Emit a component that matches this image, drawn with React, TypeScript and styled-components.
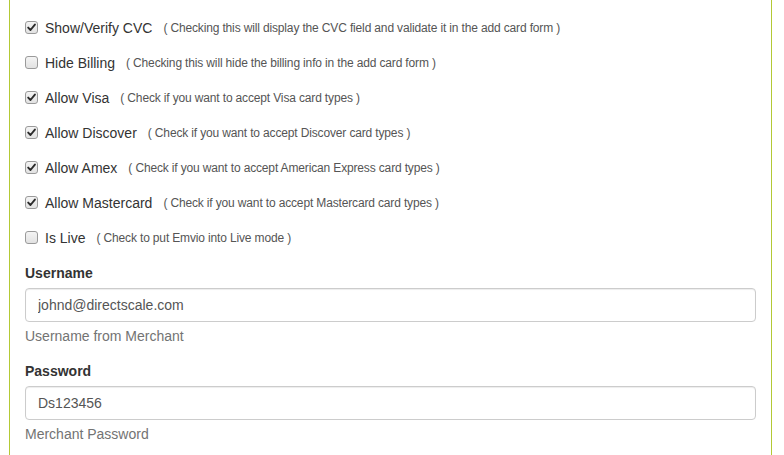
import React from 'react';
import styled, { createGlobalStyle } from 'styled-components';

const GlobalStyle = createGlobalStyle`
  html, body {
    margin: 0;
    padding: 0;
    background: #fff;
  }
  body {
    font-family: "Liberation Sans", Arial, Helvetica, sans-serif;
    font-size: 14px;
    color: #333;
  }
`;

interface Option {
    label: string;
    hint: string;
    checked: boolean;
}

const options: Option[] = [
    { label: 'Show/Verify CVC', hint: '( Checking this will display the CVC field and validate it in the add card form )', checked: true },
    { label: 'Hide Billing', hint: '( Checking this will hide the billing info in the add card form )', checked: false },
    { label: 'Allow Visa', hint: '( Check if you want to accept Visa card types )', checked: true },
    { label: 'Allow Discover', hint: '( Check if you want to accept Discover card types )', checked: true },
    { label: 'Allow Amex', hint: '( Check if you want to accept American Express card types )', checked: true },
    { label: 'Allow Mastercard', hint: '( Check if you want to accept Mastercard card types )', checked: true },
    { label: 'Is Live', hint: '( Check to put Emvio into Live mode )', checked: false },
];

const CheckBox: React.FC<{ checked: boolean }> = ({ checked }) => (
    <Box>
        {checked && (
            <svg width="9" height="9" viewBox="0 0 9 9">
                <path d="M1.2 4.6 L3.5 7 L7.9 1.6" fill="none" stroke="#2b2b2b" strokeWidth="1.9" strokeLinecap="round" strokeLinejoin="round" />
            </svg>
        )}
    </Box>
);

const App: React.FC = () => {
    return (
        <>
            <GlobalStyle />
            <Panel>
                <CheckList>
                    {options.map((o) => (
                        <CheckRow key={o.label}>
                            <CheckBox checked={o.checked} />
                            <CheckLabel>{o.label}</CheckLabel>
                            <Hint>{o.hint}</Hint>
                        </CheckRow>
                    ))}
                </CheckList>

                <FormGroup>
                    <FieldLabel>Username</FieldLabel>
                    <TextInput type="text" defaultValue="johnd@directscale.com" />
                    <HelpText>Username from Merchant</HelpText>
                </FormGroup>

                <FormGroup>
                    <FieldLabel>Password</FieldLabel>
                    <TextInput type="text" defaultValue="Ds123456" />
                    <HelpText>Merchant Password</HelpText>
                </FormGroup>
            </Panel>
        </>
    );
};

export default App;

const Panel = styled.div`
  box-sizing: border-box;
  margin-left: 9px;
  width: 763px;
  min-height: 100vh;
  padding: 10px 15px 0 15px;
  border-left: 1px solid #b3c935;
  border-right: 1px solid #b3c935;
`;

const CheckList = styled.div`
  display: flex;
  flex-direction: column;
  margin-bottom: 8px;
`;

const CheckRow = styled.div`
  display: flex;
  align-items: center;
  height: 35px;
`;

const Box = styled.span`
  box-sizing: border-box;
  width: 13px;
  height: 13px;
  border: 1px solid #9a9a9a;
  border-radius: 3px;
  background: linear-gradient(#f4f4f4, #e2e2e2);
  display: flex;
  align-items: center;
  justify-content: center;
  margin-right: 7px;
  margin-top: -1px;
  flex-shrink: 0;
`;

const CheckLabel = styled.span`
  font-size: 14px;
  color: #333;
  margin-right: 11px;
`;

const Hint = styled.span`
  font-size: 12px;
  letter-spacing: -0.15px;
  color: #555;
`;

const FormGroup = styled.div`
  display: flex;
  flex-direction: column;
  margin-bottom: 15px;
`;

const FieldLabel = styled.label`
  font-weight: bold;
  font-size: 14px;
  line-height: 20px;
  color: #333;
  margin-bottom: 5px;
`;

const TextInput = styled.input`
  box-sizing: border-box;
  width: 100%;
  height: 34px;
  padding: 6px 12px;
  font-family: "Liberation Sans", Arial, Helvetica, sans-serif;
  font-size: 14px;
  color: #555;
  background: #fff;
  border: 1px solid #ccc;
  border-radius: 4px;
  box-shadow: inset 0 1px 1px rgba(0, 0, 0, 0.075);
  outline: none;
`;

const HelpText = styled.span`
  margin-top: 4px;
  font-size: 14px;
  line-height: 20px;
  color: #737373;
`;
